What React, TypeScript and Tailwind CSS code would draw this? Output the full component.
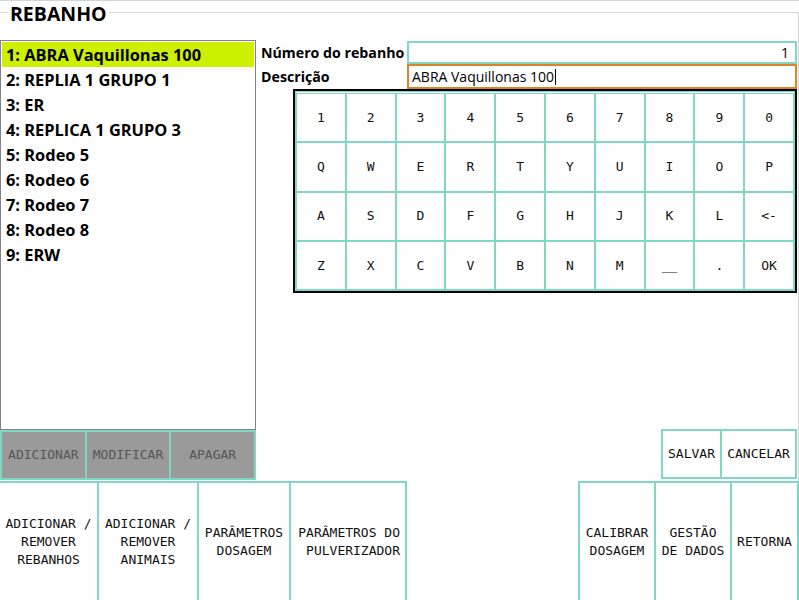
import React from 'react';

/**
 * Rebanho screen
 *
 * Herd list on the left, edit form with on-screen keyboard on the right,
 * and the fixed navigation bar at the bottom.
 */

const herds = [
  '1: ABRA Vaquillonas 100',
  '2: REPLIA 1 GRUPO 1',
  '3: ER',
  '4: REPLICA 1 GRUPO 3',
  '5: Rodeo 5',
  '6: Rodeo 6',
  '7: Rodeo 7',
  '8: Rodeo 8',
  '9: ERW',
];

const keys = [
  '1', '2', '3', '4', '5', '6', '7', '8', '9', '0',
  'Q', 'W', 'E', 'R', 'T', 'Y', 'U', 'I', 'O', 'P',
  'A', 'S', 'D', 'F', 'G', 'H', 'J', 'K', 'L', '<-',
  'Z', 'X', 'C', 'V', 'B', 'N', 'M', '__', '.', 'OK',
];

const sans = "font-['Open_Sans','Noto_Sans',sans-serif]";
const mono = "font-['DejaVu_Sans_Mono','Liberation_Mono',monospace]";

function NavButton({ lines, width, className }: { lines: string[]; width: string; className: string }) {
  return (
    <div className={`${width} ${className} flex flex-col items-center justify-center border-[#7fd7c7] text-[13px] leading-[18px] text-[#111]`}>
      {lines.map((l) => (
        <span key={l} className="whitespace-pre">{l}</span>
      ))}
    </div>
  );
}

export default function App() {
  return (
    <div className={`${sans} flex h-[600px] w-[799px] flex-col border-t border-[#d4d4d4] bg-white text-black`}>
      {/* group frame */}
      <div className="mt-[11px] flex flex-1 flex-col border-r border-t border-[#d8d8d8]">
        <div className="-mt-[12px] ml-[8px] h-[25px] w-fit bg-white px-[2px] text-[19.5px] font-bold leading-[25px]">
          REBANHO
        </div>

        <div className="mt-[14px] flex flex-1">
          {/* left: herd list */}
          <div className="flex w-[256px] flex-col">
            <div className="h-[390px] border border-[#80808f] p-px">
              {herds.map((h, i) => (
                <div
                  key={h}
                  className={`h-[25px] pl-[4px] text-[16.4px] font-bold leading-[26px] ${i === 0 ? 'bg-[#ccf000]' : ''}`}
                >
                  {h}
                </div>
              ))}
            </div>
            <div className={`${mono} grid h-[50px] grid-cols-3 border border-[#7fd7c7] text-[13px] text-[#555]`}>
              {['ADICIONAR', 'MODIFICAR', 'APAGAR'].map((b) => (
                <div key={b} className="flex items-center justify-center border border-[#7fd7c7] bg-[#9a9a9a]">
                  {b}
                </div>
              ))}
            </div>
          </div>

          {/* right: form */}
          <div className="flex flex-1 flex-col pr-px pt-px">
            <div className="flex h-[23px]">
              <div className="flex-1 pl-[5px] text-[14.2px] font-bold leading-[24px]">Número do rebanho</div>
              <div className="w-[390px] border-2 border-[#7fd7c7] pr-[6px] text-right text-[14px] leading-[19px]">1</div>
            </div>
            <div className="flex h-[25px]">
              <div className="flex-1 pl-[5px] text-[14.2px] font-bold leading-[25px]">Descrição</div>
              <div className="flex w-[390px] items-center border-2 border-[#e0822a] pl-[3px] text-[14px]">
                <span>ABRA Vaquillonas 100</span>
                <span className="ml-px h-[16px] w-px bg-black" />
              </div>
            </div>

            <div className="self-end border-2 border-black">
              <div className={`${mono} grid h-[200px] w-[500px] grid-cols-10 grid-rows-4 border border-[#7fd7c7] pt-px text-[13px] text-[#111]`}>
                {keys.map((k) => (
                  <div key={k} className="flex items-center justify-center border border-[#7fd7c7]">
                    {k}
                  </div>
                ))}
              </div>
            </div>

            <div className={`${mono} mb-[2px] mt-auto flex h-[50px] self-end text-[13px] text-[#111]`}>
              <div className="flex w-[61px] items-center justify-center border-2 border-[#7fd7c7]">SALVAR</div>
              <div className="flex w-[75px] items-center justify-center border-2 border-l-0 border-[#7fd7c7]">CANCELAR</div>
            </div>
          </div>
        </div>
      </div>

      {/* bottom navigation */}
      <div className={`${mono} flex h-[119px] justify-between`}>
        <div className="flex">
          <NavButton lines={['ADICIONAR /', 'REMOVER', 'REBANHOS']} width="w-[99px]" className="border-r-2 border-t-2" />
          <NavButton lines={['ADICIONAR /', 'REMOVER', 'ANIMAIS']} width="w-[100px]" className="border-r-2 border-t-2" />
          <NavButton lines={['PARÂMETROS', 'DOSAGEM']} width="w-[92px]" className="border-r-2 border-t-2" />
          <div className="flex w-[116px] flex-col items-end justify-center border-r-2 border-t-2 border-[#7fd7c7] pr-[5px] text-[13px] leading-[18px] text-[#111]">
            <span>PARÂMETROS DO</span>
            <span>PULVERIZADOR</span>
          </div>
        </div>
        <div className="flex">
          <NavButton lines={['CALIBRAR', 'DOSAGEM']} width="w-[76px]" className="border-l-2 border-t-2" />
          <NavButton lines={['GESTÃO', 'DE DADOS']} width="w-[76px]" className="border-l-2 border-t-2" />
          <NavButton lines={['RETORNA']} width="w-[69px]" className="border-l-2 border-r-2 border-t-2" />
        </div>
      </div>
    </div>
  );
}
